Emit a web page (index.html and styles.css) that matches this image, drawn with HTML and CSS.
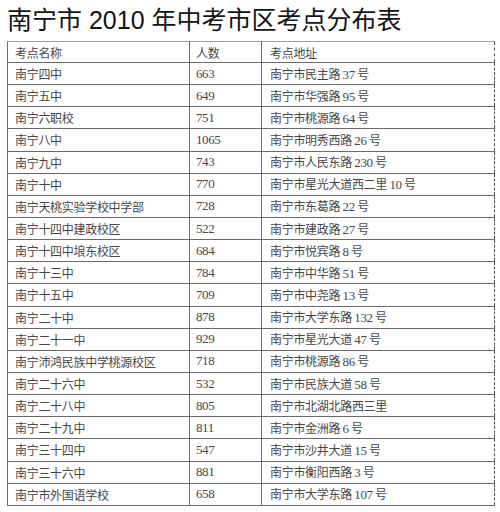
FILE: index.html
```html
<!DOCTYPE html>
<html lang="zh-CN">
<head>
<meta charset="utf-8">
<title>南宁市2010年中考市区考点分布表</title>
<link rel="stylesheet" href="styles.css">
</head>
<body>
<div class="page">
  <h1 class="title">南宁市 2010 年中考市区考点分布表</h1>
  <table class="sites">
    <colgroup>
      <col class="c-name">
      <col class="c-num">
      <col class="c-addr">
    </colgroup>
    <thead>
      <tr><th>考点名称</th><th>人数</th><th>考点地址</th></tr>
    </thead>
    <tbody>
      <tr><td>南宁四中</td><td class="n">663</td><td>南宁市民主路 <span class="n">37</span> 号</td></tr>
      <tr><td>南宁五中</td><td class="n">649</td><td>南宁市华强路 <span class="n">95</span> 号</td></tr>
      <tr><td>南宁六职校</td><td class="n">751</td><td>南宁市桃源路 <span class="n">64</span> 号</td></tr>
      <tr><td>南宁八中</td><td class="n">1065</td><td>南宁市明秀西路 <span class="n">26</span> 号</td></tr>
      <tr><td>南宁九中</td><td class="n">743</td><td>南宁市人民东路 <span class="n">230</span> 号</td></tr>
      <tr><td>南宁十中</td><td class="n">770</td><td>南宁市星光大道西二里 <span class="n">10</span> 号</td></tr>
      <tr><td>南宁天桃实验学校中学部</td><td class="n">728</td><td>南宁市东葛路 <span class="n">22</span> 号</td></tr>
      <tr><td>南宁十四中建政校区</td><td class="n">522</td><td>南宁市建政路 <span class="n">27</span> 号</td></tr>
      <tr><td>南宁十四中埌东校区</td><td class="n">684</td><td>南宁市悦宾路 <span class="n">8</span> 号</td></tr>
      <tr><td>南宁十三中</td><td class="n">784</td><td>南宁市中华路 <span class="n">51</span> 号</td></tr>
      <tr><td>南宁十五中</td><td class="n">709</td><td>南宁市中尧路 <span class="n">13</span> 号</td></tr>
      <tr><td>南宁二十中</td><td class="n">878</td><td>南宁市大学东路 <span class="n">132</span> 号</td></tr>
      <tr><td>南宁二十一中</td><td class="n">929</td><td>南宁市星光大道 <span class="n">47</span> 号</td></tr>
      <tr><td>南宁沛鸿民族中学桃源校区</td><td class="n">718</td><td>南宁市桃源路 <span class="n">86</span> 号</td></tr>
      <tr><td>南宁二十六中</td><td class="n">532</td><td>南宁市民族大道 <span class="n">58</span> 号</td></tr>
      <tr><td>南宁二十八中</td><td class="n">805</td><td>南宁市北湖北路西三里</td></tr>
      <tr><td>南宁二十九中</td><td class="n">811</td><td>南宁市金洲路 <span class="n">6</span> 号</td></tr>
      <tr><td>南宁三十四中</td><td class="n">547</td><td>南宁市沙井大道 <span class="n">15</span> 号</td></tr>
      <tr><td>南宁三十六中</td><td class="n">881</td><td>南宁市衡阳西路 <span class="n">3</span> 号</td></tr>
      <tr><td>南宁市外国语学校</td><td class="n">658</td><td>南宁市大学东路 <span class="n">107</span> 号</td></tr>
    </tbody>
  </table>
</div>
</body>
</html>
```

FILE: styles.css
```css
html, body {
  margin: 0;
  padding: 0;
  background: #ffffff;
}

.page {
  padding: 8px 7px 0 7px;
}

.title {
  margin: 0 0 8px 0;
  font-family: "Liberation Sans", "Noto Sans CJK SC", sans-serif;
  font-weight: 400;
  font-size: 25px;
  line-height: 25px;
  color: #141414;
  white-space: nowrap;
}

.sites {
  border-collapse: collapse;
  width: 487px;
  table-layout: fixed;
  font-family: "Liberation Serif", "Noto Sans CJK SC", serif;
  font-size: 12px;
  color: #474747;
}

.c-name { width: 182px; }
.c-num { width: 72px; }
.c-addr { width: 233px; }

.sites th,
.sites td {
  border: 1px solid #6a6a6a;
  padding: 0 0 0 7px;
  text-align: left;
  font-weight: 400;
  white-space: nowrap;
  font-family: "Noto Sans CJK SC", serif;
  letter-spacing: -0.3px;
}

.sites th {
  height: 20px;
  border-top-color: #a0a0a0;
}

.sites td {
  height: 21.15px;
}

.sites th:nth-child(2),
.sites td:nth-child(2) {
  padding-left: 6px;
}

.sites th:last-child,
.sites td:last-child {
  border-right: 1px dashed #555;
  padding-left: 8px;
}

.n,
.sites td.n {
  font-family: "Liberation Serif", serif;
  font-size: 13px;
  letter-spacing: -0.4px;
}
```
